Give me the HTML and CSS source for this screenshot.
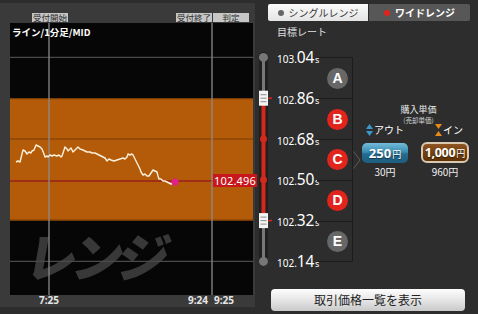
FILE: index.html
```html
<!DOCTYPE html>
<html lang="ja">
<head>
<meta charset="utf-8">
<link rel="stylesheet" href="styles.css">
</head>
<body>
<div class="app">
  <section class="left">
    <div class="marks">
      <span class="mark m-start">受付開始</span>
      <span class="spacer"></span>
      <span class="mark m-end">受付終了</span>
      <span class="mark m-judge">判定</span>
    </div>
    <div class="chart">
      <svg class="chart-svg" width="243" height="272" viewBox="0 0 243 272">
        <rect x="0" y="0" width="243" height="272" fill="#060606"/>
        <rect x="0" y="75.2" width="243" height="122.4" fill="#b35b08"/>
        <text class="wm" transform="translate(13,254) skewX(-10)" font-size="52" letter-spacing="-6" fill="#383838">レンジ</text>
        <g stroke="#4a4a4a" stroke-width="1.2">
          <line x1="0" y1="34.4" x2="243" y2="34.4"/>
          <line x1="0" y1="238.4" x2="243" y2="238.4"/>
        </g>
        <g stroke="#7a3c06" stroke-width="1.2">
          <line x1="0" y1="75.7" x2="243" y2="75.7"/>
          <line x1="0" y1="116" x2="243" y2="116"/>
          <line x1="0" y1="197.2" x2="243" y2="197.2"/>
        </g>
        <line x1="0" y1="158" x2="243" y2="158" stroke="#a02e14" stroke-width="2"/>
        <g stroke="#8c8c8c" stroke-width="1.5" opacity="0.85">
          <line x1="39" y1="0" x2="39" y2="272"/>
          <line x1="202" y1="0" x2="202" y2="272"/>
        </g>
        <polyline fill="none" stroke="#fbf1dc" stroke-width="1.4" stroke-linejoin="round"
          points="6,139 8,138 10,139 12,131 13,127 15,128 17,131 19,129 21,130 22,128 24,127 26,122 28,123 30,124 32,126 34,131 35,134 37,133 38,134 40,132 42,133 44,132 47,133 49,132 51,134 52,133 54,127 55,124 57,126 58,128 60,126 61,125 63,129 65,127 66,126 68,124 70,126 73,127 75,128 77,129 80,129 82,130 85,130 87,131 89,132 91,133 93,134 95,135 97,138 99,136 101,137 104,138 107,137 110,136 113,135 115,136 117,134 118,131 120,132 122,131 123,132 124,134 126,138 128,142 130,146 131,149 133,152 135,151 137,153 139,153 141,150 143,147 145,148 147,149 148,153 149,156 151,156 153,158 155,158 157,159 159,160 161,161 163,160"/>
        <circle cx="165" cy="159" r="3.5" fill="#e0208c"/>
      </svg>
      <div class="chart-title">ライン/1分足/MID</div>
      <div class="price-tag">102.496</div>
    </div>
    <div class="times">
      <span class="t t1">7:25</span>
      <span class="spacer"></span>
      <span class="t t2">9:24</span>
      <span class="t t3">9:25</span>
    </div>
  </section>

  <section class="right">
    <div class="tabs">
      <div class="tab tab-single"><span class="dot dot-gray"></span>シングルレンジ</div>
      <div class="tab tab-wide"><span class="dot dot-red"></span>ワイドレンジ</div>
    </div>
    <div class="rate-label">目標レート</div>
    <div class="ladder">
      <svg class="slider" width="22" height="245" viewBox="0 0 22 245">
        <rect x="4" y="15" width="9" height="214" rx="4.5" fill="#1f1f1f"/>
        <line x1="8.5" y1="20.4" x2="8.5" y2="61.2" stroke="#777" stroke-width="3"/>
        <line x1="8.5" y1="183.6" x2="8.5" y2="224.4" stroke="#777" stroke-width="3"/>
        <line x1="8.5" y1="61.2" x2="8.5" y2="183.6" stroke="#d4281c" stroke-width="4"/>
        <circle cx="8.5" cy="20.4" r="4.5" fill="#777"/>
        <circle cx="8.5" cy="224.4" r="4.5" fill="#777"/>
        <circle cx="8.5" cy="102" r="3.5" fill="#d4281c"/>
        <circle cx="8.5" cy="142.8" r="3.5" fill="#d4281c"/>
        <line x1="13" y1="61.2" x2="17" y2="61.2" stroke="#d4281c" stroke-width="1.5"/>
        <line x1="13" y1="183.6" x2="17" y2="183.6" stroke="#d4281c" stroke-width="1.5"/>
        <g>
          <rect x="4" y="53.7" width="9" height="15" fill="#f4f4f4"/>
          <g stroke="#8a8a8a" stroke-width="1">
            <line x1="5.5" y1="57.7" x2="11.5" y2="57.7"/>
            <line x1="5.5" y1="61.2" x2="11.5" y2="61.2"/>
            <line x1="5.5" y1="64.7" x2="11.5" y2="64.7"/>
          </g>
        </g>
        <g>
          <rect x="4" y="176.1" width="9" height="15" fill="#f4f4f4"/>
          <g stroke="#8a8a8a" stroke-width="1">
            <line x1="5.5" y1="180.1" x2="11.5" y2="180.1"/>
            <line x1="5.5" y1="183.6" x2="11.5" y2="183.6"/>
            <line x1="5.5" y1="187.1" x2="11.5" y2="187.1"/>
          </g>
        </g>
      </svg>
      <div class="prices">
        <div class="price"><span class="p-sm">103.</span><span class="p-lg">04</span><span class="p-s">s</span></div>
        <div class="price"><span class="p-sm">102.</span><span class="p-lg">86</span><span class="p-s">s</span></div>
        <div class="price"><span class="p-sm">102.</span><span class="p-lg">68</span><span class="p-s">s</span></div>
        <div class="price"><span class="p-sm">102.</span><span class="p-lg">50</span><span class="p-s">s</span></div>
        <div class="price"><span class="p-sm">102.</span><span class="p-lg">32</span><span class="p-s">s</span></div>
        <div class="price"><span class="p-sm">102.</span><span class="p-lg">14</span><span class="p-s">s</span></div>
      </div>
      <div class="letters">
        <div class="cell"><span class="ltr ltr-off">A</span></div>
        <div class="cell"><span class="ltr ltr-on">B</span></div>
        <div class="cell cell-sel"><span class="ltr ltr-on">C</span>
          <svg class="chev" width="8" height="18" viewBox="0 0 8 18"><polyline points="0.5,0.5 7,9 0.5,17.5" fill="none" stroke="#5a5a5a" stroke-width="1"/></svg>
        </div>
        <div class="cell"><span class="ltr ltr-on">D</span></div>
        <div class="cell"><span class="ltr ltr-off">E</span></div>
      </div>
      <div class="buy">
        <div class="buy-title">購入単価</div>
        <div class="buy-sub">(売却単価)</div>
        <div class="buy-cols">
          <div class="col col-out">
            <div class="dir">
              <svg width="7" height="12" viewBox="0 0 7 12"><polygon points="0,5 3.5,0 7,5" fill="#3a98cc"/><polygon points="0,7 7,7 3.5,12" fill="#3a98cc"/></svg>
              <span>アウト</span>
            </div>
            <div class="amt amt-out">250<span class="yen">円</span></div>
            <div class="pay">30円</div>
          </div>
          <div class="col col-in">
            <div class="dir dir-in">
              <svg width="7" height="12" viewBox="0 0 7 12"><polygon points="0,0 7,0 3.5,5" fill="#e8891c"/><polygon points="0,12 3.5,7 7,12" fill="#e8891c"/></svg>
              <span>イン</span>
            </div>
            <div class="amt amt-in">1,000<span class="yen">円</span></div>
            <div class="pay">960円</div>
          </div>
        </div>
      </div>
    </div>
    <button class="list-btn">取引価格一覧を表示</button>
  </section>
</div>
</body>
</html>
```

FILE: styles.css
```css
* { box-sizing: border-box; }

html, body {
  margin: 0;
  padding: 0;
}

body {
  width: 478px;
  height: 314px;
  overflow: hidden;
  background: #2d2d2d;
  font-family: "Noto Sans", "Noto Sans CJK JP", sans-serif;
  color: #fff;
}

.app {
  display: flex;
  height: 314px;
}

/* ---------- left chart panel ---------- */
.left {
  width: 255px;
  height: 304px;
  margin-top: 3px;
  padding-left: 10px;
  background: #3a3a3a;
  display: flex;
  flex-direction: column;
}

.marks {
  display: flex;
  width: 243px;
  height: 20px;
  padding-top: 10px;
}

.spacer { flex: 1; }

.mark {
  height: 9px;
  font-family: "Noto Sans CJK JP", sans-serif;
  font-size: 8.5px;
  line-height: 9px;
  background: #c6c6c6;
  color: #2a2a2a;
  text-align: center;
  width: 36px;
}

.m-start { margin-left: 22px; }
.m-judge { margin-left: 1px; margin-right: 4px; }

.chart {
  position: relative;
  width: 243px;
  height: 272px;
}

.chart-svg { display: block; }

.wm {
  font-family: "Noto Sans CJK JP", sans-serif;
  font-weight: 900;
}

.chart-title {
  position: absolute;
  left: 2px;
  top: 3px;
  font-family: "Noto Sans CJK JP", sans-serif;
  font-weight: 700;
  font-size: 9.5px;
  line-height: 12px;
  color: #fff;
}

.price-tag {
  position: absolute;
  left: 203px;
  top: 151px;
  width: 44px;
  height: 13px;
  background: #c8161d;
  color: #fff;
  font-size: 11px;
  line-height: 13px;
  text-align: center;
  letter-spacing: 0.2px;
}

.times {
  display: flex;
  width: 243px;
  height: 10px;
  font-size: 10px;
  line-height: 10px;
  font-weight: 700;
  color: #e6e6e6;
}

.t {
  width: 20px;
  text-align: center;
}

.t1 { margin-left: 29px; }
.t3 { margin-left: 6px; margin-right: 19px; }

/* ---------- right panel ---------- */
.right {
  flex: 1;
  display: flex;
  flex-direction: column;
}

.tabs {
  display: flex;
  width: 202px;
  height: 17px;
  margin: 4px 0 0 13px;
  font-family: "Noto Sans CJK JP", sans-serif;
  font-size: 10px;
  line-height: 17px;
}

.tab {
  display: flex;
  align-items: center;
  justify-content: center;
}

.tab-single {
  width: 100px;
  background: linear-gradient(#fbfbfb, #e4e4e4);
  color: #3a3a3a;
  border-radius: 2px 0 0 2px;
}

.tab-wide {
  flex: 1;
  margin-left: 1px;
  background: #575757;
  color: #fff;
  font-weight: 700;
  border-radius: 0 2px 2px 0;
}

.dot {
  width: 6px;
  height: 6px;
  border-radius: 50%;
  margin-right: 5px;
}

.dot-gray { background: #666; }
.dot-red { background: #e0231c; }

.rate-label {
  margin: 6px 0 0 22px;
  font-family: "Noto Sans CJK JP", sans-serif;
  font-size: 10px;
  line-height: 10px;
  color: #e0e0e0;
}

.ladder {
  display: flex;
  height: 245px;
}

.slider {
  display: block;
  flex: none;
}

.prices {
  width: 40px;
  display: flex;
  flex-direction: column;
}

.price {
  height: 40.8px;
  line-height: 40.8px;
  white-space: nowrap;
  color: #fff;
  font-family: "Noto Sans", sans-serif;
}

.p-sm { font-size: 10px; }
.p-lg { font-size: 15.5px; letter-spacing: -0.3px; }
.p-s { font-size: 9px; margin-left: 1px; }

.letters {
  width: 36px;
  margin-top: 20.4px;
  height: 205px;
  border-right: 1px solid #1c1c1c;
  display: flex;
  flex-direction: column;
}

.cell {
  position: relative;
  height: 40.8px;
  border-top: 1px solid #1c1c1c;
  display: flex;
  align-items: center;
  justify-content: flex-end;
  padding-right: 4px;
  flex: none;
}

.cell:last-child { border-bottom: 1px solid #1c1c1c; height: 41.8px; }

.ltr {
  width: 21px;
  height: 21px;
  border-radius: 50%;
  text-align: center;
  font-family: "Liberation Sans", sans-serif;
  font-weight: 700;
  font-size: 14px;
  line-height: 21px;
  color: #fff;
}

.ltr-off { background: #676767; }
.ltr-on { background: #e1251d; }

.chev {
  position: absolute;
  right: -9px;
  top: 11px;
}

.buy {
  flex: 1;
  padding-top: 67px;
  display: flex;
  flex-direction: column;
  align-items: stretch;
  font-family: "Noto Sans CJK JP", sans-serif;
}

.buy-title {
  text-align: center;
  font-size: 9px;
  line-height: 12px;
  color: #e8e8e8;
  padding-left: 6px;
}

.buy-sub {
  text-align: center;
  font-size: 6.5px;
  line-height: 9px;
  color: #d8d8d8;
  padding-left: 6px;
}

.buy-cols {
  display: flex;
  padding-left: 7px;
  gap: 10px;
}

.col {
  width: 50px;
  display: flex;
  flex-direction: column;
  align-items: center;
}

.dir {
  height: 10px;
  display: flex;
  align-items: center;
  gap: 1px;
  font-size: 10px;
  line-height: 10px;
  color: #fff;
}

.dir-in { margin-left: 8px; }

.amt {
  margin-top: 8px;
  height: 20px;
  border-radius: 5px;
  font-family: "Noto Sans", sans-serif;
  font-weight: 700;
  font-size: 13px;
  line-height: 20px;
  text-align: center;
  white-space: nowrap;
  color: #fff;
  text-shadow: 0 1px 1px rgba(0,0,0,0.5);
}

.amt-out {
  width: 46px;
  background: linear-gradient(#74bcd9, #3a8cb2 45%, #236b8f 55%, #1e5e7e);
}

.amt-in {
  width: 48px;
  height: 21px;
  margin-top: 7px;
  line-height: 17px;
  font-size: 12.5px;
  letter-spacing: -0.3px;
  border: 2px solid #d9c9b0;
  border-radius: 6px;
  background: linear-gradient(#8f5522, #74400c 50%, #603305);
}

.yen {
  font-family: "Noto Sans CJK JP", sans-serif;
  font-size: 9px;
  font-weight: 400;
  letter-spacing: 0;
  margin-left: 1px;
}

.pay {
  margin-top: 4px;
  font-size: 10px;
  line-height: 10px;
  color: #f0f0f0;
  white-space: nowrap;
}

.list-btn {
  display: block;
  margin: 7px 0 0 16px;
  width: 194px;
  height: 22px;
  padding: 0;
  border: none;
  border-radius: 4px;
  background: linear-gradient(#fdfdfd, #e6e6e6 50%, #c9c9c9);
  font-family: "Noto Sans CJK JP", sans-serif;
  font-size: 12px;
  line-height: 22px;
  color: #222;
}
```
